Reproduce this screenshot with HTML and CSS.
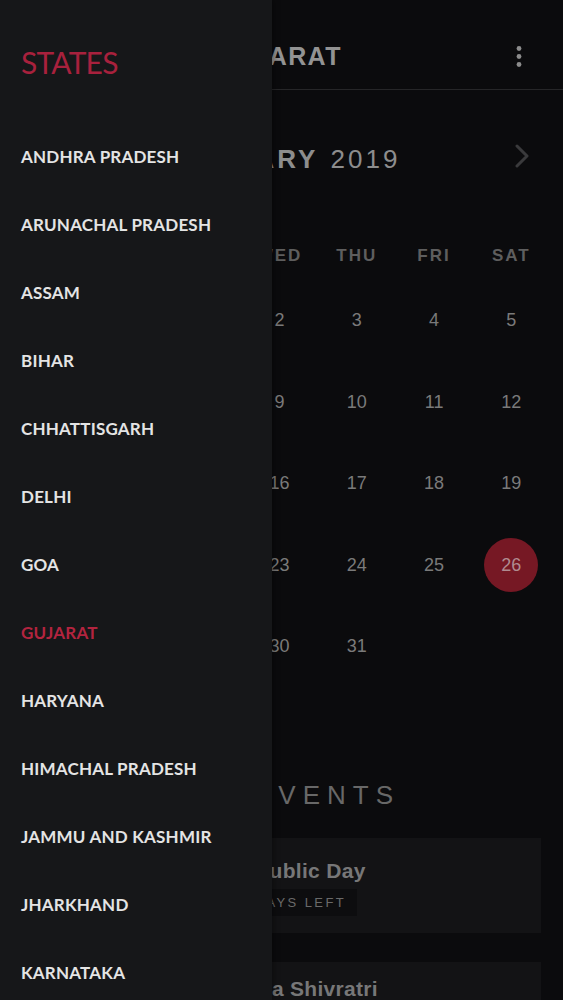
FILE: index.html
```html
<!DOCTYPE html>
<html lang="en">
<head>
<meta charset="utf-8">
<title>Gujarat Holidays</title>
<link rel="stylesheet" href="styles.css">
</head>
<body>
<div class="screen">
  <main class="app">
    <header class="toolbar">
      <h1 class="title">GUJARAT</h1>
      <svg class="menu" width="8" height="21" viewBox="0 0 8 21" aria-hidden="true">
        <circle cx="4" cy="2.5" r="2.4"/><circle cx="4" cy="10.5" r="2.4"/><circle cx="4" cy="18.5" r="2.4"/>
      </svg>
    </header>

    <section class="calendar">
      <div class="month">
        <span class="month-name"><b>JANUARY</b> 2019</span>
        <svg class="next" width="14" height="24" viewBox="0 0 14 24" aria-hidden="true">
          <path d="M2 2 L12 12 L2 22" fill="none" stroke-width="3" stroke-linecap="round" stroke-linejoin="round"/>
        </svg>
      </div>
      <div class="weekdays">
        <span>SUN</span><span>MON</span><span>TUE</span><span>WED</span><span>THU</span><span>FRI</span><span>SAT</span>
      </div>
      <div class="days">
        <span></span><span></span><span>1</span><span>2</span><span>3</span><span>4</span><span>5</span>
        <span>6</span><span>7</span><span>8</span><span>9</span><span>10</span><span>11</span><span>12</span>
        <span>13</span><span>14</span><span>15</span><span>16</span><span>17</span><span>18</span><span>19</span>
        <span>20</span><span>21</span><span>22</span><span>23</span><span>24</span><span>25</span><span><i class="today">26</i></span>
        <span>27</span><span>28</span><span>29</span><span>30</span><span>31</span><span></span><span></span>
      </div>
    </section>

    <section class="events">
      <h2 class="events-title">EVENTS</h2>
      <div class="card">
        <div class="card-title">Republic Day</div>
        <div class="badge">0 DAYS LEFT</div>
      </div>
      <div class="card">
        <div class="card-title">Maha Shivratri</div>
        <div class="badge">8 DAYS LEFT</div>
      </div>
    </section>
  </main>

  <nav class="drawer">
    <h2 class="drawer-title">STATES</h2>
    <ul class="states">
      <li>ANDHRA PRADESH</li>
      <li>ARUNACHAL PRADESH</li>
      <li>ASSAM</li>
      <li>BIHAR</li>
      <li>CHHATTISGARH</li>
      <li>DELHI</li>
      <li>GOA</li>
      <li class="active">GUJARAT</li>
      <li>HARYANA</li>
      <li>HIMACHAL PRADESH</li>
      <li>JAMMU AND KASHMIR</li>
      <li>JHARKHAND</li>
      <li>KARNATAKA</li>
    </ul>
  </nav>
</div>
</body>
</html>
```

FILE: styles.css
```css
* { box-sizing: border-box; }

html, body {
  margin: 0;
  padding: 0;
  background: #0b0b0d;
}

.screen {
  position: relative;
  width: 563px;
  height: 1000px;
  overflow: hidden;
  font-family: "Liberation Sans", Arial, sans-serif;
}

/* ---------- main app (dimmed behind drawer) ---------- */
.app {
  background: #0b0b0d;
  min-height: 1000px;
}

.toolbar {
  height: 90px;
  padding-top: 24px;
  display: flex;
  align-items: center;
  justify-content: center;
  position: relative;
  border-bottom: 1px solid #262628;
}

.title {
  margin: 0 0 0 -8px;
  font-size: 25px;
  font-weight: 700;
  color: #939393;
  letter-spacing: 1.4px;
}

.menu {
  position: absolute;
  right: 40px;
  top: 46px;
  fill: #8c8c8c;
}

.month {
  height: 138px;
  display: flex;
  align-items: center;
  justify-content: center;
  position: relative;
}

.month-name {
  margin-left: 10px;
  font-size: 26px;
  letter-spacing: 3px;
  color: #8d8d8d;
}

.month-name b {
  font-weight: 700;
  margin-right: 2px;
}

.next {
  position: absolute;
  right: 34px;
  top: 54px;
  stroke: #3a3a3c;
}

.weekdays,
.days {
  display: grid;
  grid-template-columns: repeat(7, 1fr);
  padding: 0 13px 0 9px;
  text-align: center;
}

.weekdays {
  margin-top: 3px;
  height: 49px;
  align-items: center;
  font-size: 17px;
  font-weight: 700;
  letter-spacing: 2px;
  color: #5e5e5e;
}

.days {
  grid-auto-rows: 81.5px;
  align-items: center;
  justify-items: center;
  font-size: 18px;
  color: #7a7a7a;
}

.today {
  font-style: normal;
  display: flex;
  align-items: center;
  justify-content: center;
  width: 54px;
  height: 54px;
  border-radius: 50%;
  background: #761824;
  color: #b08b90;
}

.events {
  padding: 0 22px;
}

.events-title {
  margin: 77px 0 0 0;
  height: 62px;
  display: flex;
  align-items: center;
  padding-left: 232px;
  font-size: 26px;
  font-weight: 400;
  letter-spacing: 7px;
  color: #686868;
}

.card {
  margin-top: 11px;
  height: 95px;
  background: #131315;
  padding: 21px 0 0 207px;
}

.card + .card {
  margin-top: 29px;
  padding-top: 15px;
}

.card-title {
  font-size: 21px;
  line-height: 24px;
  font-weight: 700;
  color: #777778;
  letter-spacing: 0.3px;
}

.badge {
  display: inline-block;
  margin-top: 6px;
  padding: 6px 11px 6px 10px;
  line-height: 15px;
  background: #0d0d0f;
  font-size: 13px;
  letter-spacing: 2.4px;
  color: #6a6a6a;
}

/* ---------- navigation drawer ---------- */
.drawer {
  position: absolute;
  left: 0;
  top: 0;
  width: 272px;
  height: 1000px;
  background: #161719;
  font-family: Lato, "Open Sans", sans-serif;
  box-shadow: 2px 0 6px rgba(0, 0, 0, 0.35);
}

.drawer-title {
  margin: 0;
  padding: 44px 0 0 21px;
  height: 122px;
  font-size: 30px;
  font-weight: 400;
  line-height: 36px;
  color: #a8213d;
  letter-spacing: -0.8px;
}

.states {
  list-style: none;
  margin: 0;
  padding: 0;
}

.states li {
  height: 68px;
  padding-left: 21px;
  display: flex;
  align-items: center;
  font-size: 17px;
  font-weight: 700;
  color: #e4e4e4;
  letter-spacing: 0.2px;
}

.states li.active {
  color: #b3243f;
}
```
